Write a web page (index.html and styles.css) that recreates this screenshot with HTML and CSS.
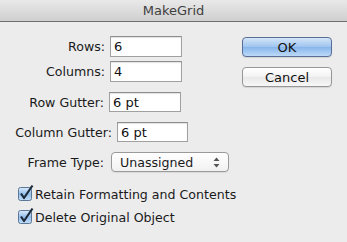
FILE: index.html
```html
<!DOCTYPE html>
<html lang="en">
<head>
    <meta charset="UTF-8">
    <title>MakeGrid</title>
    <link rel="stylesheet" href="styles.css">
</head>
<body>
    <div class="window">
        <div class="titlebar">MakeGrid</div>
        <div class="content">
            <div class="form">
                <div class="field">
                    <label class="label">Rows:</label>
                    <input type="text" class="textbox" value="6">
                </div>
                <div class="field field-tight">
                    <label class="label">Columns:</label>
                    <input type="text" class="textbox" value="4">
                </div>
                <div class="field field-gutter">
                    <label class="label label-short">Row Gutter:</label>
                    <input type="text" class="textbox" value="6 pt">
                </div>
                <div class="field field-gutter">
                    <label class="label label-wide">Column Gutter:</label>
                    <input type="text" class="textbox textbox-small" value="6 pt">
                </div>
                <div class="field field-gutter">
                    <label class="label label-short label-select">Frame Type:</label>
                    <div class="select">
                        <span>Unassigned</span>
                        <svg class="arrows" width="7" height="11" viewBox="0 0 7 11">
                            <path d="M3.5 0.5 L6.5 4 L0.5 4 Z" fill="#555"/>
                            <path d="M3.5 10.5 L6.5 7 L0.5 7 Z" fill="#555"/>
                        </svg>
                    </div>
                </div>
                <div class="check-row check-first">
                    <svg class="checkbox" width="17" height="17" viewBox="0 0 17 17">
                        <defs>
                            <linearGradient id="cb1" x1="0" y1="0" x2="0" y2="1">
                                <stop offset="0" stop-color="#dcebfb"/>
                                <stop offset="0.5" stop-color="#94c0ee"/>
                                <stop offset="1" stop-color="#c2ddf8"/>
                            </linearGradient>
                        </defs>
                        <rect x="0.5" y="3.5" width="13" height="13" rx="2" fill="url(#cb1)" stroke="#5d7897"/>
                        <path d="M3 9.5 L6 14 L14.5 1.5" fill="none" stroke="#1c2a3a" stroke-width="2.2" stroke-linejoin="round"/>
                    </svg>
                    <span>Retain Formatting and Contents</span>
                </div>
                <div class="check-row">
                    <svg class="checkbox" width="17" height="17" viewBox="0 0 17 17">
                        <rect x="0.5" y="3.5" width="13" height="13" rx="2" fill="url(#cb1)" stroke="#5d7897"/>
                        <path d="M3 9.5 L6 14 L14.5 1.5" fill="none" stroke="#1c2a3a" stroke-width="2.2" stroke-linejoin="round"/>
                    </svg>
                    <span>Delete Original Object</span>
                </div>
            </div>
            <div class="actions">
                <button class="btn btn-default">OK</button>
                <button class="btn">Cancel</button>
            </div>
        </div>
    </div>
</body>
</html>
```

FILE: styles.css
```css
* {
    margin: 0;
    padding: 0;
    box-sizing: border-box;
}

body {
    font-family: 'DejaVu Sans', sans-serif;
    font-size: 12.6px;
    color: #1a1a1a;
    background-color: #ececec;
    width: 347px;
    height: 242px;
    overflow: hidden;
    white-space: nowrap;
}

.titlebar {
    height: 22px;
    line-height: 21px;
    text-align: center;
    font-size: 13px;
    color: #404040;
    background: linear-gradient(#e9e9e9, #cfcfcf);
    border-bottom: 1px solid #6e6e6e;
}

.content {
    display: flex;
}

.form {
    flex: 1;
    min-width: 0;
    padding-top: 14px;
}

.field {
    display: flex;
    align-items: center;
}

.field-tight {
    margin-top: 4px;
}

.field-gutter {
    margin-top: 10px;
}

.label {
    width: 105px;
    padding-right: 5px;
    text-align: right;
    box-sizing: content-box;
}

.label-short {
    width: 104px;
}

.label-wide {
    width: 112px;
}

.label-select {
    padding-right: 7px;
}

.textbox {
    width: 72px;
    height: 21px;
    padding: 0 3px;
    font-family: inherit;
    font-size: 13px;
    color: #111;
    background-color: white;
    border: 1px solid #a0a0a0;
    border-top-color: #8e8e8e;
    box-shadow: inset 0 1px 1px rgba(0, 0, 0, 0.12);
    outline: none;
}

.field-gutter .textbox {
    height: 20px;
}

.textbox-small {
    width: 71px;
}

.select {
    width: 118px;
    height: 20px;
    display: flex;
    align-items: center;
    justify-content: space-between;
    padding: 0 8px;
    background: linear-gradient(#ffffff, #f1f1f1);
    border: 1px solid #9a9a9a;
    border-radius: 4px;
    box-shadow: 0 1px 1px rgba(0, 0, 0, 0.08);
}

.check-row {
    display: flex;
    align-items: center;
    margin-top: 6px;
    padding-left: 18px;
    height: 17px;
}

.check-first {
    margin-top: 12px;
}

.checkbox {
    margin-right: 0;
}

.check-row span {
    padding-top: 3px;
}

.actions {
    width: 90px;
    margin-right: 15px;
    padding-top: 15px;
    display: flex;
    flex-direction: column;
    gap: 10px;
}

.btn {
    height: 20px;
    font-family: inherit;
    font-size: 13px;
    color: #111;
    background: linear-gradient(#ffffff, #f2f2f2 50%, #e8e8e8 51%, #f7f7f7);
    border: 1px solid #969696;
    border-radius: 4px;
    box-shadow: 0 1px 1px rgba(0, 0, 0, 0.1);
}

.btn-default {
    background: linear-gradient(#d4e5f8, #9ec4ef 50%, #87b5ea 51%, #bcdaf9);
    border-color: #5a6d96;
}
```
